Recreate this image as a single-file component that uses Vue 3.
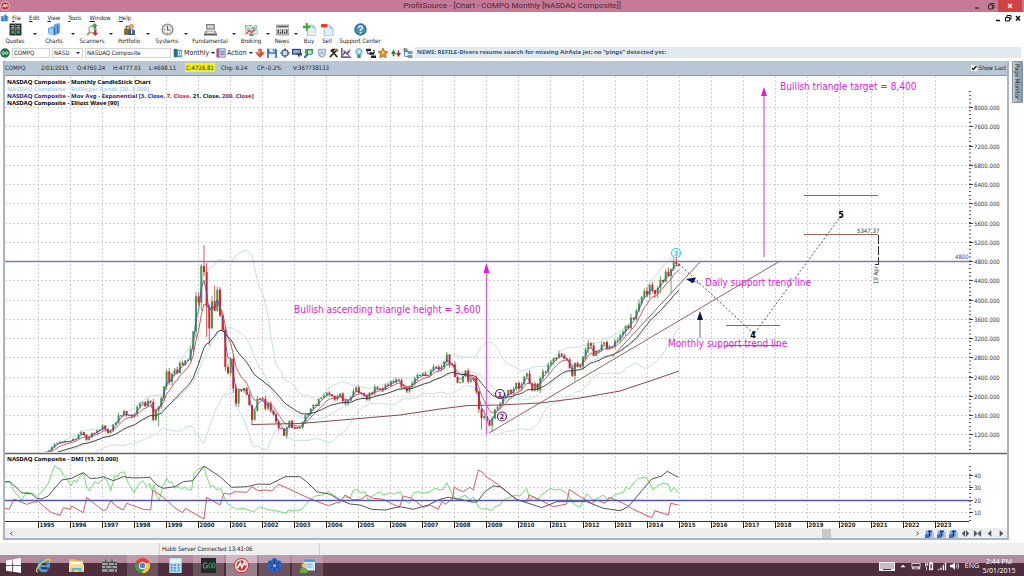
<script setup>
import { ref } from 'vue'

const symbol = ref('COMPQ')
const exchange = ref('NASD')
const company = ref('NASDAQ Composite')
const showLast = ref(true)

const menus = ['File', 'Edit', 'View', 'Tools', 'Window', 'Help']

const icons = {
  app: '<circle cx="6" cy="6" r="5.500" fill="#f0dfe4"/><circle cx="6" cy="6" r="4.600" fill="#c8302c"/><path d="M3 7.500 5 4l1.300 3.500L8 4l1 3" fill="none" stroke="#fff" stroke-width="1.200"/>',
  doc: '<path d="M1 4h4V2h4v2h2v7H1z" fill="#6fa6dc"/><path d="M3 6h2v5H3zM7 4h2v7H7z" fill="#2f6fb5"/>',
  quotes: '<rect x=".5" y=".5" width="11" height="11" fill="#26302a"/><path d="M2 2.500h3M7 2.500h3M2 4.500h3M7 4.500h3" stroke="#ccc"/><path d="M2 7h3v3H2zM7 7h3v3H7z" fill="#3aa34b"/><path d="M0 6h12M6 0v12" stroke="#888" stroke-width=".6"/>',
  charts: '<path d="M0 4.500 5 3l1-2 5-1v9l-5 2.500L0 9.500z" fill="#6aa8e6"/><path d="M1 5h4v6H1z" fill="#9bccf5"/><path d="M6 4v7M9 2v8" stroke="#2c6fbe" stroke-width="1.200"/>',
  scanners: '<path d="M1 11 4.500 7.500" stroke="#c49a4a" stroke-width="2"/><circle cx="6" cy="6" r="3.300" fill="#e8f1f8" stroke="#999"/><path d="M8 0l3 3H9.200v3H7V3H5z" fill="#38a548"/><path d="M8.500 12 5.500 9H7.500V6.500h2V9h2z" fill="#cf2f2f"/>',
  portfolio: '<path d="M1 5h7v6H1z" fill="#876b3a"/><path d="M3 5V3h3v2" fill="none" stroke="#4a3a20"/><circle cx="8" cy="3" r="2.300" fill="#d9a878"/><path d="M5 11V7q3-3 6 0v4z" fill="#3c5c80"/><path d="M8 6v4" stroke="#f2f2f2"/>',
  systems: '<circle cx="6" cy="6" r="5" fill="#eee" stroke="#8f8f84" stroke-width="1.300"/><path d="M6 2.500V6.500h2.500M3 6h1M6 9v1" fill="none" stroke="#666"/><circle cx="6" cy="6" r="3.500" fill="none" stroke="#bbb" stroke-width=".6"/>',
  fundamental: '<path d="M2 1h8v5H2z" fill="#687078"/><path d="M3 2h6v3H3z" fill="#dcdcc0"/><path d="M1 7h10l1 3H0z" fill="#a4a9a6"/><path d="M0 10h12v1.500H0z" fill="#525a5a"/><path d="M3 8.500h6" stroke="#fff"/>',
  broking: '<path d="M0 2h11v4H0z" fill="#78bfa2"/><path d="M1 5l2-2 2 2 2-3 3 2" fill="none" stroke="#fff"/><path d="M0 7h12v3H0z" fill="#eee" stroke="#888" stroke-width=".5"/><path d="M1 10l3-3 2 2 3-3" fill="none" stroke="#d83434"/><path d="M4 10h4v2H4z" fill="#5a9c80"/>',
  news: '<path d="M0 2h12v9H0z" fill="#eee" stroke="#777" stroke-width=".8"/><path d="M1 3.500h10" stroke="#333"/><path d="M2 6v4M4 6v1M4 8v2M6 6v4M8 6v1M8 8v2M10 6v4" stroke="#333" stroke-width="1.200"/>',
  buy: '<path d="M4 2h5l3 3v7H4z" fill="#e2f0fb" stroke="#7dabd2" stroke-width=".7"/><path d="M9 2v3h3" fill="#8cbce3"/><path d="M2.500 0h2v2.500H7v2H4.500V7h-2V4.500H0v-2h2.500z" fill="#36b030"/>',
  sell: '<path d="M3 2h5l3 3v7H3z" fill="#e2f0fb" stroke="#7dabd2" stroke-width=".7"/><path d="M8 2v3h3" fill="#8cbce3"/><path d="M0 1h6v3H0z" fill="#df3a2c"/>',
  support: '<circle cx="6" cy="6" r="5.700" fill="#2d6d9e"/><circle cx="6" cy="6" r="4.300" fill="#4b95c8"/><path d="M4.300 4.500q0-1.800 1.700-1.800t1.700 1.500Q7.700 5.200 6 6v1.300M6 8.400v1.300" fill="none" stroke="#fff" stroke-width="1.200"/>',
  go: '<circle cx="6" cy="6" r="5.700" fill="#24724a"/><path d="M5.200 4.500Q2.500 3.500 2.500 6t2.700 1.500V6H4.300" fill="none" stroke="#fff" stroke-width=".9"/><circle cx="8" cy="6" r="1.500" fill="none" stroke="#fff" stroke-width=".9"/>',
  period: '<path d="M1 2h10v9H1z" fill="#4a9cc0"/><path d="M1 1h4v10H1z" fill="#29718e"/><path d="M6 4h4v5H6z" fill="#eaf5fa"/><path d="M8 5v3M2.500 3v6" stroke="#24607e"/>',
  action: '<path d="M1 1h10v10H1z" fill="#dce2f5" stroke="#6572a5"/><path d="M1 1h3v10H1z" fill="#ba5a74"/><path d="M5 4h5M5 6h5M5 8h5" stroke="#505da4"/>',
  down: '<path d="M4 1h4v4h4L6 12 0 5h4z" fill="#df4a30"/><path d="M5 2h1v5H3" fill="#f59a72"/>',
  save: '<path d="M0 1h11l1 1v10H0z" fill="#3478c5"/><path d="M3 1h6v4H3zM2 7h8v5H2z" fill="#e7f1fc"/><path d="M7 1.500h1.200V4H7z" fill="#275b99"/>',
  target: '<circle cx="6" cy="6" r="3.800" fill="#dce4f1" stroke="#4a5a85" stroke-width="1.500"/><path d="M6 0v4M6 8v4M0 6h4M8 6h4" stroke="#4a5a85" stroke-width="1.300"/>',
  monitor: '<path d="M0 1h11v7H0z" fill="#33477c"/><path d="M1.500 2.500h8v4h-8z" fill="#95abd8"/><path d="M5 6h7v3H9v3z" fill="#3b4668"/>',
  zoomin: '<path d="M0 12 5 7" stroke="#316aa5" stroke-width="2.500"/><path d="M1 1h10v6H1z" fill="#4ba26a"/><circle cx="7" cy="5" r="3" fill="#c9e8d3" stroke="#27754a"/>',
  shield: '<path d="M1 1h10v6q-1 4-5 5Q2 11 1 7z" fill="#9cb4cc"/><path d="M3 3h6v4Q8 9 6 10 4 9 3 7z" fill="#edf4fa"/><path d="M4 5h4M4 7h4" stroke="#6485a6"/>',
  tools: '<path d="M1 11 9 3M3 3l7 8" stroke="#363125" stroke-width="2"/><path d="M1 4 4 1h4L5 5z" fill="#2d2a22"/><path d="M8 1l3 3" stroke="#987031" stroke-width="2"/>',
  graph: '<path d="M1 0v11h11" fill="none" stroke="#252a75" stroke-width="1.400"/><path d="M2 9l3-4 2 2 4-5M3 3l7 6" fill="none" stroke="#a13668" stroke-width="1.300"/><path d="M3 5h2v2H3zM8 4h2v2H8z" fill="#3443a4"/>',
  bulb: '<circle cx="6" cy="4.500" r="4" fill="#94d5f4" stroke="#4a9fce" stroke-width=".8"/><path d="M4 8h4v4H4z" fill="#4d7996"/><path d="M5 3h2v3H5z" fill="#edfaff"/>',
  flow: '<path d="M0 1h6v3H0zM4 5h6v3H4zM6 9h6v3H6z" fill="#20242c"/><path d="M2 4v3h4M8 3h2v3" fill="none" stroke="#20242c"/>',
  star: '<path d="M6 0l1.800 3.800 4.200.5L9 7.300 9.700 12 6 9.700 2.300 12 3 7.300 0 4.300l4.200-.5z" fill="#eb8a22" stroke="#99571a" stroke-width=".8"/><path d="M6 3l1 2.500L6 8 4.500 5.500z" fill="#ffe085"/>',
  updown: '<path d="M0 7 3 2l3 5H4v3H2V7z" fill="#267a32"/><path d="M6 6h2V3h2v3h2L9 11z" fill="#b42c2c"/>',
  tree: '<path d="M2 0v10h4M2 4h4" fill="none" stroke="#3d6382"/><path d="M1 1h4v3H1zM6 4h5v3H6zM6 9h5v3H6z" fill="#79a5c7" stroke="#386183" stroke-width=".6"/>',
  nav: '<path d="M1 2h9v9H1z" fill="#7ea9dc"/><path d="M0 7h6v5H0z" fill="#3d75bd"/><path d="M4 2h5v2H7v6H5V4H4z" fill="#173e7c"/><path d="M10 4h2v8H7v-2h3z" fill="#a8c8ed"/>',
  win: '<path d="M0 2l5-.8v4.500H0zM5.700 1 12 0v5.700H5.700zM0 6.400h5V11l-5-.8zM5.700 6.400H12V12l-6.300-1z" fill="#fff"/>',
  ie: '<circle cx="6.200" cy="6.300" r="4" fill="none" stroke="#39a5e8" stroke-width="2.200"/><path d="M3 6.500h7.500" stroke="#39a5e8" stroke-width="1.700"/><path d="M8.700 7.500h3.300v1.800H8z" fill="#5d3b4d"/><path d="M1.500 10.800Q-.8 11 1.500 7.500 5 2.500 9.500 1q3-.7 1.300 2.500" fill="none" stroke="#f4c22e" stroke-width="1.100"/>',
  folder: '<path d="M0 1h5l1 1h5v9H0z" fill="#e9c55c"/><path d="M1 3h10v3H1z" fill="#fffbe4"/><path d="M0 5h12v6H0z" fill="#f7dc86"/><path d="M2 11V8h8v3H8V9.500H4V11z" fill="#64b3dc"/>',
  wall: '<path d="M0 1h12v10H0z" fill="#a1a3a1"/><path d="M0 3.500h12M0 6h12M0 8.500h12M3 1v2.500M8 1v2.500M5 3.500V6M10 3.500V6M3 6v2.500M8 6v2.500M5 8.500V11M10 8.500V11" stroke="#4b494b" stroke-width=".9"/>',
  chrome: '<circle cx="6" cy="6" r="6" fill="#e34133"/><path d="M.8 3A6 6 0 0 0 5.500 12L8.600 7.500 6 6 3.400 7.500z" fill="#31a351"/><path d="M11.700 4A6 6 0 0 1 5.500 12L8.700 7.300 8 4z" fill="#f8cd2d"/><circle cx="6" cy="6" r="2.900" fill="#fff"/><circle cx="6" cy="6" r="2.200" fill="#4385ea"/>',
  calc: '<path d="M1 0h10v12H1z" fill="#b6daee"/><path d="M2 1h8v3H2z" fill="#e9f7ff"/><path d="M3 5v6M5.500 5v6M8.500 5v6" stroke="#528db5" stroke-width="1.500" stroke-dasharray="1.300 .9"/>',
  gotrade: '<path d="M0 0h12v12H0z" fill="#232b2a"/><path d="M4.900 4.300Q1.800 3 1.800 6t3.200 1.600V6H4" fill="none" stroke="#8a958f" stroke-width=".8"/><path d="M6.300 6q0-2 1.300-2T9 6t1.200 1.900Q11.300 8 11.300 6t-1.100-1.900Q9.500 4.100 9 6T7.600 8Q6.300 8 6.300 6" fill="none" stroke="#33a35b" stroke-width=".8"/>',
  profit: '<circle cx="6" cy="6" r="6" fill="#d32d2c"/><circle cx="6" cy="6" r="4.700" fill="#d32d2c" stroke="#fff" stroke-width="1.100"/><path d="M2.800 8 5 4l1.300 3.500L8.200 3.500 9.300 6" fill="none" stroke="#fff" stroke-width="1.300"/>',
  flower: '<g fill="#2d65c4"><circle cx="6" cy="2.200" r="2.200"/><circle cx="9.300" cy="4" r="2.200"/><circle cx="9.300" cy="8" r="2.200"/><circle cx="6" cy="9.800" r="2.200"/><circle cx="2.700" cy="8" r="2.200"/><circle cx="2.700" cy="4" r="2.200"/></g><path d="M6 1v10M1.800 3.500l8.400 5M10.200 3.500l-8.400 5" stroke="#142b67" stroke-width=".6"/><circle cx="6" cy="6" r="1.300" fill="#93baf5"/>',
  people: '<path d="M3 1h9v9H3z" fill="#d4eafa"/><path d="M3 1h9v2H3z" fill="#4f91c9"/><path d="M5 5h5M5 7h5" stroke="#86b6dc"/><circle cx="3" cy="6" r="1.800" fill="#efbd72"/><path d="M0 12V9q3-3 6 0v3z" fill="#6cab42"/>',
  keyboard: '<path d="M0 2h16v9H0z" fill="#f2eef1"/><path d="M1.500 4h13M1.500 6h13M1.500 8h13" stroke="#4b2f3d" stroke-dasharray="1 1"/><path d="M4 9.500h8" stroke="#4b2f3d"/>',
  up: '<path d="M3 7.500 6 4.500l3 3z" fill="#fff"/>',
  drive: '<path d="M1 3h10v4H1z" fill="none" stroke="#e9dfe5"/><path d="M1 7h10v3H1z" fill="#d8ccd3"/><path d="M3 8.500h5" stroke="#49303d"/>',
  battery: '<path d="M6 2h5v9H6z" fill="#f3edf1"/><path d="M7.500 1h2v1h-2z" fill="#fff"/><path d="M1 4h4M2 2v5M4 2v4M3 7v4" stroke="#f3edf1"/><path d="M7.500 4h2v5h-2z" fill="#765968"/>',
  signal: '<path d="M1 11h1.500V9.500H1zM4 11h1.500V8H4zM7 11h1.500V5H7zM9.500 11H11V2H9.500z" fill="#fff"/><path d="M1 11 11 1" stroke="#b9a5b0" stroke-width=".6"/>',
  sound: '<path d="M0 4.500h2.500L6 1.500v9L2.500 7.500H0z" fill="#fff"/><path d="M7.500 4q1.500 2 0 4M9.300 2.500q2.500 3.500 0 7" fill="none" stroke="#eee"/>'
}

const tools = [
  { label: 'Quotes', icon: 'quotes', menu: true },
  { label: 'Charts', icon: 'charts', menu: true },
  { label: 'Scanners', icon: 'scanners', menu: true },
  { label: 'Portfolio', icon: 'portfolio', menu: true },
  { label: 'Systems', icon: 'systems', menu: true },
  { label: 'Fundamental', icon: 'fundamental', menu: true },
  { label: 'Broking', icon: 'broking', menu: true },
  { label: 'News', icon: 'news', menu: true },
  { label: 'Buy', icon: 'buy' },
  { label: 'Sell', icon: 'sell' },
  { label: 'Support Center', icon: 'support' }
]
const quick = ['down', 'save', 'target', 'monitor', 'zoomin', 'shield', 'tools', 'graph', 'bulb', 'flow', 'star', 'updown', 'tree']
const quote = ['COMPQ', '2/01/2015', 'O:4760.24', 'H:4777.01', 'L:4698.11', 'C:4726.81', 'Chg:-9.24', 'CP:-0.2%', 'V:367738133']
const tasks = [
  { icon: 'win', label: 'Start' },
  { icon: 'ie', label: 'Internet Explorer' },
  { icon: 'folder', label: 'File Explorer' },
  { icon: 'wall', label: 'Wall' },
  { icon: 'chrome', label: 'Chrome', open: true },
  { icon: 'calc', label: 'Calculator' },
  { icon: 'gotrade', label: 'GO', open: true },
  { icon: 'profit', label: 'ProfitSource', open: true, active: true },
  { icon: 'flower', label: 'Meeting', open: true },
  { icon: 'people', label: 'Contacts', open: true }
]
const tray = ['up', 'drive', 'battery', 'signal', 'sound']

/* Monthly closes, January 1995 to January 2015 */
const closes = [
  755, 794, 817, 844, 865, 933, 1001, 1020, 1044, 1036, 1059, 1052,
  1060, 1100, 1101, 1191, 1243, 1185, 1081, 1142, 1227, 1222, 1293, 1291,
  1380, 1309, 1222, 1261, 1400, 1442, 1594, 1587, 1686, 1594, 1601, 1570,
  1619, 1771, 1836, 1868, 1779, 1895, 1872, 1499, 1694, 1771, 1950, 2193,
  2506, 2288, 2461, 2543, 2471, 2686, 2638, 2739, 2746, 2966, 3336, 4069,
  3940, 4697, 4573, 3861, 3401, 3966, 3767, 4206, 3673, 3370, 2598, 2471,
  2773, 2152, 1840, 2116, 2110, 2161, 2027, 1805, 1499, 1690, 1931, 1950,
  1934, 1731, 1845, 1688, 1616, 1463, 1328, 1315, 1172, 1330, 1479, 1336,
  1321, 1338, 1341, 1464, 1596, 1623, 1735, 1810, 1787, 1932, 1960, 2003,
  2066, 2030, 1994, 1920, 1987, 2048, 1887, 1838, 1897, 1975, 2097, 2175,
  2062, 2052, 1999, 1922, 2068, 2057, 2185, 2152, 2152, 2120, 2233, 2205,
  2306, 2281, 2340, 2323, 2179, 2172, 2091, 2184, 2258, 2367, 2432, 2415,
  2464, 2416, 2422, 2525, 2605, 2603, 2546, 2596, 2702, 2859, 2661, 2652,
  2390, 2271, 2279, 2413, 2523, 2293, 2326, 2368, 2092, 1721, 1536, 1577,
  1476, 1378, 1529, 1717, 1774, 1835, 1979, 2009, 2122, 2045, 2145, 2269,
  2147, 2238, 2398, 2461, 2257, 2109, 2255, 2114, 2369, 2507, 2498, 2653,
  2700, 2782, 2781, 2874, 2835, 2774, 2756, 2579, 2415, 2684, 2620, 2605,
  2814, 2967, 3092, 3046, 2827, 2935, 2940, 3067, 3116, 2977, 3010, 3020,
  3142, 3160, 3268, 3329, 3456, 3403, 3626, 3590, 3771, 3920, 4060, 4177,
  4104, 4308, 4199, 4115, 4243, 4408, 4370, 4580, 4493, 4631, 4792, 4736,
  4727
]
const highs = { 62: 5132, 66: 4289, 68: 4259, 154: 2861 }
const lows = { 45: 1357, 63: 3227, 64: 3043, 80: 1387, 93: 1108, 166: 1295, 170: 1265, 188: 2061, 201: 2299, 237: 4117 }

const px = i => 38.5 + i * 2.669
const py = p => 492 - p * 0.0481
const fx = v => v.toFixed(1)

const candles = closes.map((c, i) => {
  const o = i ? closes[i - 1] : 750
  const spread = c * 0.012 + Math.abs(c - o) * 0.12
  const hi = highs[i] || Math.max(o, c) + spread * ((i * 37) % 11) / 7
  const lo = lows[i] || Math.min(o, c) - spread * ((i * 53) % 13) / 8
  return {
    x: px(i), up: c >= o, hi: py(hi), lo: py(lo),
    top: py(Math.max(o, c)), h: Math.max(1, Math.abs(c - o) * 0.0481)
  }
}).filter(c => c.top < 452)

function ema(n) {
  let e = n > 10 ? 740 : 750
  return closes.map((c, i) => {
    e += (c - e) * 2 / (n + 1)
    return fx(px(i)) + ',' + fx(py(e))
  }).join(' ')
}
function band(k) {
  const history = [...Array(19).fill(750), ...closes]
  return closes.map((c, i) => {
    const w = history.slice(i, i + 20)
    const m = w.reduce((a, b) => a + b) / 20
    const sd = Math.sqrt(w.reduce((a, b) => a + (b - m) ** 2, 0) / 20)
    return fx(px(i)) + ',' + fx(py(m + k * sd))
  }).join(' ')
}
const bands = [band(2), band(0), band(-2)]

const third = (ox, list) => {
  const out = []
  for (let i = 0; i < list.length; i += 2) out.push(fx(ox + list[i] / 3) + ',' + fx(450 + list[i + 1] / 3))
  return out.join(' ')
}
const dmiPlus = third(0, [15, 97, 30, 95, 40, 120, 65, 152, 78, 127, 100, 130, 112, 140, 130, 120, 145, 100, 158, 62, 165, 47, 172, 55, 180, 55, 190, 75, 200, 85, 212, 108, 222, 90, 228, 98, 240, 80, 250, 68, 260, 110, 268, 122, 285, 95, 295, 102, 310, 85, 320, 90, 332, 122, 345, 75, 355, 80, 358, 70, 372, 65, 385, 100, 402, 128, 415, 105, 428, 92, 440, 110, 450, 100, 455, 120, 462, 105, 470, 140, 478, 150, 488, 110, 500, 85, 508, 98, 515, 95, 525, 115, 535, 108, 545, 118, 555, 110, 565, 120, 575, 118, 582, 70, 590, 62, 600, 55, 612, 52, 622, 85, 632, 112, 640, 105, 650, 120, 662, 115, 672, 140, 682, 160, 695, 170, 710, 178, 730, 175, 760, 185, 780, 170, 800, 178, 830, 183, 860, 190, 865, 180, 885, 183, 905, 178, 930, 150, 945, 138, 965, 135, 985, 125, 1000, 135])
  + ' ' + third(340, [0, 150, 15, 140, 30, 145, 40, 120, 50, 118, 65, 130, 75, 125, 85, 150, 95, 140, 110, 130, 120, 125, 130, 135, 150, 128, 160, 132, 182, 125, 190, 150, 208, 160, 220, 130, 235, 125, 250, 130, 270, 125, 285, 115, 300, 120, 310, 118, 320, 98, 335, 130, 350, 150, 375, 135, 390, 150, 400, 140, 415, 170, 428, 178, 440, 175, 455, 182, 465, 170, 480, 165, 490, 150, 510, 142, 525, 135, 540, 138, 560, 115, 570, 150, 580, 140, 590, 150, 605, 135, 632, 115, 645, 120, 660, 118, 680, 130, 695, 152, 705, 165, 720, 172, 740, 132, 760, 150, 775, 145, 790, 135, 805, 150, 820, 138, 835, 130, 850, 128, 858, 110, 868, 118, 880, 100, 895, 85, 915, 82, 925, 90, 940, 120, 955, 105, 970, 100, 985, 103, 992, 125, 1002, 112, 1015, 128])
const dmiAdx = third(0, [15, 95, 30, 95, 65, 128, 95, 132, 110, 145, 125, 147, 145, 138, 185, 90, 215, 85, 235, 75, 250, 68, 270, 85, 290, 85, 310, 80, 340, 92, 370, 80, 400, 84, 430, 83, 450, 82, 470, 105, 490, 115, 525, 110, 550, 95, 578, 92, 612, 48, 660, 80, 695, 112, 740, 110, 775, 102, 810, 103, 855, 80, 900, 80, 920, 95, 950, 125, 990, 133])
  + ' ' + third(340, [0, 150, 30, 162, 60, 165, 95, 178, 135, 180, 165, 173, 180, 170, 220, 178, 265, 165, 300, 148, 325, 142, 360, 148, 400, 157, 412, 155, 435, 125, 460, 108, 480, 110, 530, 148, 560, 158, 605, 173, 650, 155, 690, 155, 740, 155, 790, 175, 840, 182, 865, 170, 935, 87, 965, 78, 982, 64, 1015, 82])
const dmiMinus = third(0, [15, 175, 28, 178, 42, 147, 80, 163, 98, 157, 115, 155, 130, 168, 155, 188, 180, 196, 190, 173, 210, 178, 215, 168, 250, 188, 260, 142, 310, 182, 320, 178, 332, 152, 350, 170, 370, 180, 380, 160, 430, 178, 452, 180, 458, 120, 480, 135, 500, 150, 520, 170, 548, 188, 556, 175, 612, 207, 620, 142, 660, 165, 672, 130, 690, 133, 705, 125, 740, 127, 755, 110, 775, 122, 800, 120, 815, 123, 835, 103, 870, 118, 905, 135, 945, 152, 985, 167, 1010, 158])
  + ' ' + third(340, [0, 158, 15, 135, 40, 150, 65, 147, 80, 135, 100, 145, 130, 148, 178, 172, 190, 138, 215, 145, 250, 172, 270, 165, 295, 178, 305, 155, 318, 163, 330, 150, 337, 150, 343, 110, 352, 118, 370, 125, 390, 112, 400, 120, 415, 60, 425, 65, 440, 82, 455, 90, 480, 108, 530, 150, 560, 157, 568, 135, 600, 150, 640, 170, 680, 162, 688, 118, 720, 140, 755, 160, 770, 150, 795, 160, 808, 142, 850, 160, 880, 178, 935, 203, 945, 182, 985, 195, 992, 160, 1015, 165])

const years = Array.from({ length: 29 }, (_, i) => ({ label: 1995 + i, x: Math.round(38 + i * 32.03) + 0.5 }))
const prices = Array.from({ length: 18 }, (_, i) => 1200 + i * 400)
  .map(p => ({ label: p + '.000', y: Math.round(py(p)) + 0.5 }))
const dmiLevels = [{ v: 40, y: 476 }, { v: 30, y: 488 }, { v: 20, y: 501 }, { v: 10, y: 513 }]
</script>

<template>
  <div class="page">
    <header class="titlebar">
      <svg class="appicon" viewBox="0 0 12 12" v-html="icons.app" />
      <h1>ProfitSource - [Chart - COMPQ Monthly [NASDAQ Composite]]</h1>
      <div class="winbtns">
        <button aria-label="Minimize"><svg viewBox="0 0 8 8"><path d="M2 6h4" stroke="#222" stroke-width="1.200" /></svg></button>
        <button aria-label="Restore"><svg viewBox="0 0 8 8"><path d="M1.500 3h4v4h-4zM3 3V1.500h4V6H5.500" fill="none" stroke="#3a2a34" /></svg></button>
        <button class="close" aria-label="Close"><svg viewBox="0 0 8 8"><path d="M2 2l4 4M6 2 2 6" stroke="#fff" stroke-width="1.200" /></svg></button>
      </div>
    </header>

    <nav class="menubar">
      <svg class="docicon" viewBox="0 0 12 12" v-html="icons.doc" />
      <button v-for="m in menus" :key="m"><u>{{ m[0] }}</u>{{ m.slice(1) }}</button>
      <span class="mdi">
        <button aria-label="Minimize chart"><svg viewBox="0 0 8 8"><path d="M2 6.500h4" stroke="#111" stroke-width="1.500" /></svg></button>
        <button aria-label="Restore chart"><svg viewBox="0 0 8 8"><path d="M1.500 3.500h4v3.500h-4zM3 3.500V1.500h4V5H5.500" fill="none" stroke="#111" /></svg></button>
        <button aria-label="Close chart"><svg viewBox="0 0 8 8"><path d="M2 2l4 4.500M6 2 2 6.500" stroke="#111" stroke-width="1.500" /></svg></button>
      </span>
    </nav>

    <div class="toolbar">
      <template v-for="t in tools" :key="t.label">
        <button class="tool"><svg viewBox="0 0 12 12" v-html="icons[t.icon]" /><span>{{ t.label }}</span></button>
        <button v-if="t.menu" class="caret" :aria-label="t.label + ' menu'"><i /></button>
      </template>
    </div>

    <div class="symbolbar">
      <button class="go" aria-label="Go"><svg viewBox="0 0 12 12" v-html="icons.go" /></button>
      <input v-model="symbol" class="sym" aria-label="Symbol">
      <span class="pick">
        <select v-model="exchange" aria-label="Exchange"><option>NASD</option></select>
        <i />
      </span>
      <input v-model="company" class="company" aria-label="Company">
      <button class="drop period"><svg viewBox="0 0 12 12" v-html="icons.period" />Monthly<i /></button>
      <button class="drop action"><svg viewBox="0 0 12 12" v-html="icons.action" />Action<i /></button>
      <span class="quick">
        <button v-for="q in quick" :key="q" :aria-label="q"><svg viewBox="0 0 12 12" v-html="icons[q]" /></button>
      </span>
      <p class="news">NEWS: REFILE-Divers resume search for missing AirAsia jet; no "pings" detected yet:</p>
    </div>

    <div class="work">
      <main class="frame">
        <div class="quote">
          <span v-for="(q, i) in quote" :key="q" :class="{ hot: i === 5 }"><b>{{ q }}</b></span>
          <label class="last"><input v-model="showLast" type="checkbox"><svg viewBox="0 0 6 6"><path d="M0 0h6v6H0z" fill="#fff" /><path v-if="showLast" d="M1 3l1.500 1.500L5.500 1" fill="none" stroke="#111" stroke-width="1.300" /></svg>Show Last</label>
        </div>

        <svg class="chart" viewBox="5 76 1002 452">
          <defs>
            <clipPath id="pricearea"><rect x="5" y="76" width="965" height="376" /></clipPath>
          </defs>
          <g stroke="#d0d0d0" stroke-dasharray="2 2">
            <path v-for="y in years" :key="y.label" :d="`M${y.x} 76V521`" />
            <path v-for="p in prices" :key="p.label" :d="`M5 ${p.y}H969`" />
            <path v-for="l in dmiLevels" :key="l.v" :d="`M5 ${l.y - 0.5}H969`" />
          </g>

          <g clip-path="url(#pricearea)" fill="none">
            <polyline v-for="(b, i) in bands" :key="i" :points="b" stroke="#c4e0ea" />
            <g v-for="(c, i) in candles" :key="i" :class="c.up ? 'up' : 'dn'">
              <path :d="`M${c.x} ${c.hi}V${c.lo}`" />
              <rect :x="c.x - 1" :y="c.top" width="2" :height="c.h" />
            </g>
            <polyline :points="ema(3)" stroke="#4a48b4" stroke-width=".8" />
            <polyline :points="ema(7)" stroke="#d24444" stroke-width=".9" />
            <polyline :points="ema(21)" stroke="#444" />
            <polyline points="252,424.500 300,423.500 330,421 400,415 440,409 468,405.500 500,405 540,403 580,398 620,391 650,381 679,371" stroke="#8a4a4a" />
          </g>

          <g stroke="#96645c" fill="none">
            <path d="M489 433 780 261M612 357 700 262M726 325.500H780M726 345.500H780M804 195.500H878M804 234.500H878" />
          </g>
          <path d="M5 261.500H972" stroke="#7c7cb4" stroke-width="1.500" />
          <path d="M679 264 754 334 841 216" fill="none" stroke="#555" stroke-dasharray="2 2" />
          <path d="M878.500 235V264" stroke="#333" stroke-dasharray="9 2" />
          <path d="M875 264.500h4" stroke="#333" />

          <g stroke="#e060e0" stroke-width="1.300">
            <path d="M486.500 435V270M764 257V94" />
          </g>
          <path d="M486.500 263l3 10h-6zM764 87l3 9h-6z" fill="#e018e0" />
          <path d="M686 279l10-1.500-3 6z" fill="#10106c" />
          <path d="M694 281l6 3" stroke="#4c4c80" stroke-dasharray="2 1" />
          <path d="M700 338V318" stroke="#6a6a9c" />
          <path d="M700 311l3 9h-6z" fill="#10106c" />

          <g class="note">
            <text x="294" y="313">Bullish ascending triangle height = 3,600</text>
            <text x="780" y="90">Bullish triangle target = 8,400</text>
            <text x="705" y="286">Daily support trend line</text>
            <text x="668" y="347">Monthly support trend line</text>
          </g>
          <g class="wave">
            <circle cx="500" cy="394" r="4.500" stroke="#701878" />
            <text x="500" y="397" fill="#701878">1</text>
            <circle cx="502" cy="416.500" r="4.500" stroke="#701878" />
            <text x="502" y="419" fill="#701878">2</text>
            <circle cx="676" cy="253" r="4.500" stroke="#28d8e4" />
            <text x="676" y="256" fill="#28d8e4">3</text>
          </g>
          <text class="target" x="753" y="338">4</text>
          <text class="target" x="841" y="218">5</text>
          <text class="small" x="857" y="233">5347.37</text>
          <text class="small" transform="translate(878 284) rotate(-90)">19 Apr</text>
          <text class="small blue" x="955" y="259">4800</text>

          <g class="legend">
            <text x="7" y="84">NASDAQ Composite - Monthly CandleStick Chart</text>
            <text x="7" y="91" fill="#b4d2e8">NASDAQ Composite - Bollinger Bands [20, 2.000]</text>
            <text x="7" y="98" fill="#1c1c78">NASDAQ Composite - Mov Avg - Exponential [<tspan fill="#2020d0">3, Close, </tspan><tspan fill="#e02020">7, Close, </tspan><tspan fill="#111">21, Close, </tspan><tspan fill="#8c1c1c">200, Close</tspan>]</text>
            <text x="7" y="105">NASDAQ Composite - Elliott Wave [90]</text>
            <text x="7" y="461">NASDAQ Composite - DMI [13, 20.000]</text>
          </g>

          <path d="M970 91V452M970 466V521" stroke="#555" stroke-width="2" stroke-dasharray="1 2.850" />
          <g v-for="p in prices" :key="'t' + p.label">
            <path :d="`M969 ${p.y}h4`" stroke="#444" />
            <text class="small" x="974" :y="p.y + 2">{{ p.label }}</text>
          </g>
          <path d="M5 453.500H1007" stroke="#666" stroke-width="1.300" />

          <g fill="none">
            <polyline :points="dmiPlus" stroke="#6be06b" />
            <polyline :points="dmiMinus" stroke="#d85a62" />
            <polyline :points="dmiAdx" stroke="#555" />
          </g>
          <path d="M5 500.500H969" stroke="#5656a8" stroke-width="1.300" />
          <g v-for="l in dmiLevels" :key="'d' + l.v">
            <path :d="`M969 ${l.y - 0.5}h4`" stroke="#444" />
            <text class="small" x="974" :y="l.y + 2">{{ l.v }}</text>
          </g>
          <path d="M5 521.500H969" stroke="#333" />
          <g v-for="y in years" :key="'y' + y.label">
            <path :d="`M${y.x} 521V528`" stroke="#222" />
            <text class="year" :x="y.x + 1" y="527">{{ y.label }}</text>
          </g>
        </svg>

        <div class="scroller">
          <button class="left" aria-label="Scroll left"><svg viewBox="0 0 10 10"><path d="M6 3 4 5l2 2" fill="none" stroke="#333" /></svg></button>
          <div class="track"><div class="thumb" /></div>
          <button aria-label="Scroll right"><svg viewBox="0 0 10 10"><path d="M4 3l2 2-2 2" fill="none" stroke="#333" /></svg></button>
          <button v-for="n in 3" :key="n" :aria-label="'Chart view ' + n"><svg viewBox="0 0 12 12" v-html="icons.nav" /></button>
          <button aria-label="Widen"><svg viewBox="0 0 10 10"><path d="M4.500 1v8L1 5zM5.500 1v8L9 5z" fill="#4c5864" /></svg></button>
          <button aria-label="Narrow"><svg viewBox="0 0 10 10"><path d="M1 1v8l4-4zM9 1v8L5 5z" fill="#4c5864" /></svg></button>
          <button aria-label="Previous"><svg viewBox="0 0 10 10"><path d="M7 1.500v7L3 5z" fill="#4c5864" /></svg></button>
          <button aria-label="Next"><svg viewBox="0 0 10 10"><path d="M3 1.500v7L7 5z" fill="#4c5864" /></svg></button>
        </div>
      </main>
      <aside><button class="monitor">Page Monitor</button></aside>
    </div>

    <div class="status"><span class="cell" /><span class="cell">Hubb Server Connected 13:43:06</span></div>

    <footer class="taskbar">
      <button v-for="t in tasks" :key="t.icon" :class="{ open: t.open, active: t.active }" :aria-label="t.label">
        <svg viewBox="0 0 12 12" v-html="icons[t.icon]" />
      </button>
      <div class="tray">
        <svg class="kbd" viewBox="0 0 16 12" v-html="icons.keyboard" />
        <svg v-for="t in tray" :key="t" viewBox="0 0 12 12" v-html="icons[t]" />
        <span class="lang">ENG</span>
        <time class="clock"><span>2:44 PM</span><span>5/01/2015</span></time>
      </div>
    </footer>
  </div>
</template>

<style>
body {
  margin: 0;
  background: #fff;
}
</style>

<style scoped>
.page {
  display: flex;
  flex-direction: column;
  min-height: 100vh;
  font-family: "DejaVu Sans Condensed", "DejaVu Sans", sans-serif;
  font-size: 6px;
  line-height: 8px;
  color: #222;
  background: #fff;
}
button, input, select {
  font: inherit;
  color: inherit;
  background: none;
  border: 0;
  padding: 0;
  margin: 0;
  min-width: 0;
  box-sizing: border-box;
}
svg { display: block; }
i {
  display: block;
  border: 2px solid transparent;
  border-top-color: #222;
  border-bottom: 0;
}
.titlebar {
  display: grid;
  grid-template-columns: 90px 1fr 90px;
  align-items: center;
  height: 12px;
  background: #c57b98;
}
.appicon { width: 10px; height: 10px; }
.titlebar h1 {
  margin: 0;
  text-align: center;
  font: 8px/12px Roboto, "Open Sans", sans-serif;
  color: #4a2838;
}
.winbtns { display: flex; justify-content: flex-end; padding-right: 2px; }
.winbtns button {
  display: grid;
  place-items: center;
  width: 14px;
  height: 12px;
}
.winbtns .close { width: 24px; background: #cf4346; }
.winbtns svg, .mdi svg { width: 8px; height: 8px; }
.menubar { display: flex; align-items: center; gap: 8px; height: 11px; padding-right: 2px; }
.docicon { width: 9px; height: 9px; margin-right: -5px; }
.mdi { display: flex; gap: 2px; margin-left: auto; }
.toolbar {
  display: grid;
  grid-template-columns: 30px 10px 28px 10px 28px 9px 28px 10px 28px 10px 38px 10px 24px 9px 20px 8px 18px 18px 48px;
  height: 22px;
}
.tool {
  display: flex;
  flex-direction: column;
  align-items: center;
  line-height: 8px;
  white-space: nowrap;
}
.tool svg { width: 13px; height: 13px; margin-bottom: 1px; }
.caret { display: grid; place-items: center; }
.symbolbar { display: flex; align-items: center; height: 15px; gap: 2px; }
.symbolbar svg { width: 10px; height: 10px; flex: none; }
.sym, .company, .pick {
  height: 10px;
  border: 1px solid #d4d4d4;
  padding: 0 1px;
}
.sym { width: 38px; }
.pick { display: flex; align-items: center; box-sizing: border-box; width: 31px; padding-right: 2px; }
.pick select { appearance: none; flex: 1; height: 8px; }
.company { width: 86px; }
.drop { display: flex; align-items: center; gap: 1px; font-size: 7px; white-space: nowrap; }
.drop i { margin-left: 1px; }
.period { width: 41px; }
.action { width: 37px; }
.quick { display: flex; width: 158px; justify-content: space-between; }
.news {
  flex: 1;
  height: 11px;
  margin: 0 3px 0 0;
  padding-left: 2px;
  background: #e3eaef;
  font: bold 6px/11px "Noto Sans", sans-serif;
  color: #35587a;
  white-space: nowrap;
}
.work { display: flex; padding: 1px 0 3px 3px; }
.frame { flex: 1; min-width: 0; border: 2px solid #a9b5c1; border-top: 0; }
.quote {
  display: flex;
  align-items: center;
  height: 14px;
  background: #b8c7d3;
  border-bottom: 1px solid #8d99a5;
  white-space: nowrap;
}
.quote span { width: 36px; }
.quote b { font-weight: normal; }
.hot b { padding: 1px; background: #f4f020; }
.last { display: flex; align-items: center; gap: 1px; margin-left: auto; padding-right: 1px; }
.last input { appearance: none; width: 0; height: 6px; }
.last svg { width: 6px; height: 6px; }
.chart { width: 100%; height: auto; }
.chart text { font-family: "DejaVu Sans Condensed", "DejaVu Sans", sans-serif; }
.up path { stroke: #5c9c5c; stroke-width: .9; }
.up rect { fill: #449a4c; }
.dn path { stroke: #d84040; stroke-width: .9; }
.dn rect { fill: #dc2020; }
.note text { font-size: 10px; fill: #e220e2; }
.wave circle { fill: none; stroke-width: 1.2; }
.wave text { font-size: 7px; font-weight: bold; text-anchor: middle; }
.target { font-size: 9px; font-weight: bold; text-anchor: middle; }
.small { font-size: 6px; fill: #333; }
.chart .blue { fill: #3c3ca8; }
.chart .legend text { font-family: "Noto Sans", sans-serif; font-size: 6px; font-weight: bold; }
.year { font-size: 6px; font-weight: bold; fill: #222; }
.scroller { display: flex; align-items: center; height: 10px; background: #eee; }
.scroller button { display: grid; place-items: center; width: 12px; height: 10px; }
.scroller svg { width: 9px; height: 9px; }
.track { flex: 1; display: flex; justify-content: flex-end; padding-right: 80px; }
.thumb { width: 9px; height: 9px; background: #c8c8c8; }
aside { width: 15px; padding-left: 3px; box-sizing: border-box; }
.monitor {
  width: 11px;
  height: 42px;
  writing-mode: vertical-rl;
  border: 1px solid #8592a2;
  border-radius: 1px;
  background: linear-gradient(90deg, #c6d0dc, #8794a8);
  line-height: 9px;
  text-align: center;
}
.status { display: flex; height: 12px; background: #efefef; line-height: 12px; }
.cell { width: 157px; padding-left: 2px; border-right: 1px solid #d4d4d4; }
.taskbar {
  display: flex;
  height: 21px;
  margin-top: auto;
  background: linear-gradient(#b18b9d 0 8px, #4e2e3c 8px);
}
.taskbar > button {
  display: grid;
  place-items: center;
  width: 31px;
  height: 21px;
  margin-right: 2px;
}
.taskbar > button:first-child { width: 26px; }
.taskbar > button svg { width: 15px; height: 15px; }
.taskbar .open { background: rgba(255, 255, 255, .17); }
.taskbar .active { background: rgba(255, 255, 255, .4); }
.tray {
  display: flex;
  align-items: center;
  gap: 3px;
  margin-left: auto;
  padding-right: 8px;
  color: #fff;
  font-family: "Open Sans", "Noto Sans", sans-serif;
}
.tray svg { width: 10px; height: 10px; }
.tray .kbd { width: 16px; height: 12px; }
.lang { font-size: 7px; margin-left: 2px; }
.clock { display: flex; flex-direction: column; width: 34px; text-align: center; font-size: 7px; line-height: 9px; }
</style>
